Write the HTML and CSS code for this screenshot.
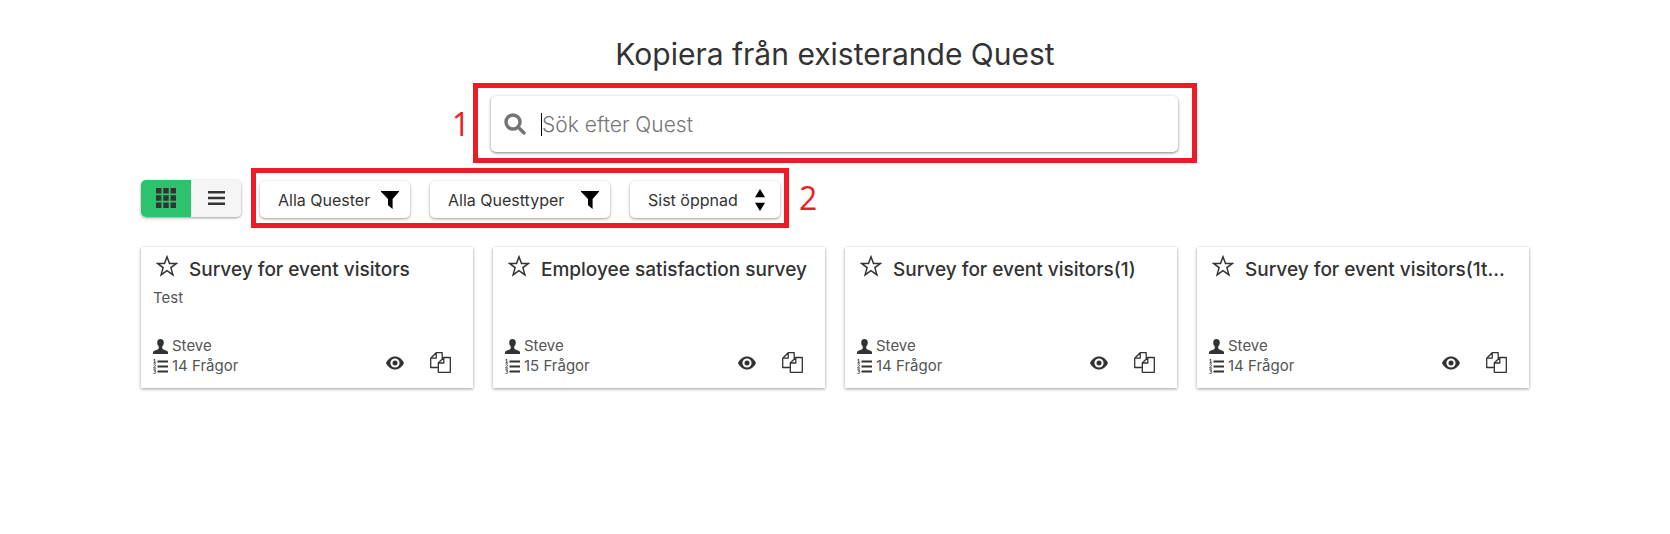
FILE: index.html
```html
<!DOCTYPE html>
<html lang="sv">
<head>
  <meta charset="UTF-8">
  <meta name="viewport" content="width=device-width, initial-scale=1.0">
  <title>Kopiera från existerande Quest</title>
  <link rel="stylesheet" href="styles.css">
</head>
<body>
  <!-- Shared icons -->
  <svg class="sprite" aria-hidden="true">
    <symbol id="icon-search" viewBox="0 0 22 22">
      <circle cx="9" cy="9" r="7" fill="none" stroke="currentColor" stroke-width="3.4"/>
      <path d="M14.500 14.500l5.500 5.500" stroke="currentColor" stroke-width="3.400" stroke-linecap="round"/>
    </symbol>
    <symbol id="icon-grid" viewBox="0 0 20 20">
      <path d="M0 0h5.4v5.4H0zM7.3 0h5.4v5.4H7.3zM14.6 0H20v5.4h-5.4zM0 7.3h5.4v5.4H0zM7.3 7.3h5.4v5.4H7.3zM14.6 7.3H20v5.4h-5.4zM0 14.6h5.4V20H0zM7.3 14.6h5.4V20H7.3zM14.6 14.6H20V20h-5.4z"/>
    </symbol>
    <symbol id="icon-list" viewBox="0 0 17 14">
      <path d="M0 0h17v2.600H0zM0 5.700h17v2.600H0zM0 11.400h17V14H0z"/>
    </symbol>
    <symbol id="icon-filter" viewBox="0 0 18 18">
      <path d="M0 0h18v.8L11.6 8v10L7 14.2V8L0 .8z"/>
    </symbol>
    <symbol id="icon-sort" viewBox="0 0 10 22">
      <path d="M5 0l5 8.2H0zM5 22l5-8.2H0z"/>
    </symbol>
    <symbol id="icon-star" viewBox="0 0 22 22">
      <path d="M11 1.800l2.500 6.600h7l-5.600 4.200 2 7.300L11 15.700l-5.900 4.200 2-7.300L1.500 8.400h7z" fill="none" stroke="currentColor" stroke-width="1.500"/>
    </symbol>
    <symbol id="icon-user" viewBox="0 0 14 14">
      <path d="M7 0c2 0 3.100 1.300 3.100 3.300 0 1.500-.6 2.900-1.500 3.700v1.500c0 .6.4 1 1 1.300l3 1.200c.9.400 1.400 1 1.400 1.900V14H0v-1.100c0-.9.5-1.500 1.400-1.900l3-1.200c.6-.3 1-.7 1-1.300V7C4.500 6.200 3.900 4.800 3.900 3.300 3.900 1.300 5 0 7 0z"/>
    </symbol>
    <symbol id="icon-numbered" viewBox="0 0 15 15">
      <path d="M4.500 1.500H15v2H4.500zM4.500 6.500H15v2H4.500zM4.500 11.500H15v2H4.500z"/>
      <path d="M.5 1l1.300-.6V4M.4 4h2.700M.5 6.100c.4-.7 2.100-.6 2.100.4 0 .9-1.600 1.200-2 2.600h2.500M.4 10.900h2.300l-1.200 1.400c1.800 0 1.700 2.200.2 2.200-.6 0-1-.1-1.300-.4" fill="none" stroke="currentColor" stroke-width=".9"/>
    </symbol>
    <symbol id="icon-eye" viewBox="0 0 18 14">
      <path fill-rule="evenodd" d="M9 .5c4 0 7 2.500 9 6.500-2 4-5 6.500-9 6.500S2 11 0 7C2 3 5 .5 9 .5zM9 2.400a4.600 4.600 0 1 0 0 9.200 4.600 4.600 0 0 0 0-9.200z"/>
      <circle cx="9" cy="7" r="2.500"/>
    </symbol>
    <symbol id="icon-copy" viewBox="0 0 21 21">
      <path d="M8.300 15.500H.7V6.200L6.200.7h6v5.500M6.200.7v5.500H.7M13.800 5.500h6.500v14.800H8.300V11zM13.800 5.500V11H8.300z" fill="none" stroke="currentColor" stroke-width="1.300" stroke-linejoin="round"/>
    </symbol>
  </svg>

  <main class="container">
    <h1>Kopiera från existerande Quest</h1>

    <!-- Search -->
    <div class="highlight search-area">
      <span class="step step-search">1</span>
      <label class="search">
        <svg class="icon-search" aria-hidden="true"><use href="#icon-search"/></svg>
        <span class="caret"></span>
        <input type="text" placeholder="Sök efter Quest" aria-label="Sök efter Quest">
      </label>
    </div>

    <!-- View toggle and filters -->
    <div class="toolbar">
      <div class="view-toggle">
        <button type="button" class="active" aria-label="Rutnät"><svg class="icon-grid"><use href="#icon-grid"/></svg></button>
        <button type="button" aria-label="Lista"><svg class="icon-list"><use href="#icon-list"/></svg></button>
      </div>
      <div class="highlight filters">
        <label class="filter">
          <select aria-label="Quester"><option>Alla Quester</option></select>
          <svg class="icon-filter" aria-hidden="true"><use href="#icon-filter"/></svg>
        </label>
        <label class="filter filter-wide">
          <select aria-label="Questtyper"><option>Alla Questtyper</option></select>
          <svg class="icon-filter" aria-hidden="true"><use href="#icon-filter"/></svg>
        </label>
        <label class="filter">
          <select aria-label="Sortering"><option>Sist öppnad</option></select>
          <svg class="icon-sort" aria-hidden="true"><use href="#icon-sort"/></svg>
        </label>
      </div>
      <span class="step">2</span>
    </div>

    <div class="cards" id="cards"></div>
  </main>

  <script>
    const quests = [
      { title: "Survey for event visitors", description: "Test", owner: "Steve", questions: 14 },
      { title: "Employee satisfaction survey", description: "", owner: "Steve", questions: 15 },
      { title: "Survey for event visitors(1)", description: "", owner: "Steve", questions: 14 },
      { title: "Survey for event visitors(1t...", description: "", owner: "Steve", questions: 14 },
    ];

    // One card per quest
    document.querySelector("#cards").innerHTML = quests.map((quest) => `
      <article class="card">
        <header class="card-header">
          <button type="button" aria-label="Favorit"><svg class="icon-star"><use href="#icon-star"/></svg></button>
          <h2>${quest.title}</h2>
        </header>
        <p class="description">${quest.description}</p>
        <footer class="card-footer">
          <div class="meta">
            <div><svg class="icon-user"><use href="#icon-user"/></svg>${quest.owner}</div>
            <div><svg class="icon-numbered"><use href="#icon-numbered"/></svg>${quest.questions} Frågor</div>
          </div>
          <div class="actions">
            <button type="button" aria-label="Förhandsgranska"><svg class="icon-eye"><use href="#icon-eye"/></svg></button>
            <button type="button" aria-label="Kopiera"><svg class="icon-copy"><use href="#icon-copy"/></svg></button>
          </div>
        </footer>
      </article>
    `).join("");
  </script>
</body>
</html>
```
FILE: styles.css
```css
* {
  box-sizing: border-box;
}

body {
  font-family: Inter, "Open Sans", sans-serif;
  background-color: #fff;
  color: #333;
  margin: 0;
}

button, input, select {
  font-family: inherit;
  color: inherit;
}

button {
  display: flex;
  align-items: center;
  justify-content: center;
  padding: 0;
  border: none;
  background: none;
  cursor: pointer;
}

svg {
  display: block;
  flex: none;
  fill: currentColor;
}

.sprite {
  position: absolute;
  width: 0;
  height: 0;
}

.container {
  max-width: 1428px;
  margin: 0 auto;
  padding: 36px 20px;
}

h1 {
  margin: 0 0 11px;
  font-size: 30px;
  line-height: 36px;
  font-weight: 400;
  text-align: center;
}

/* Red frames and step numbers */
.highlight {
  border: 5px solid #ed1c24;
}

.step {
  font-family: "Open Sans", sans-serif;
  font-size: 32px;
  line-height: 40px;
  color: #ed1c24;
}

.step-search {
  position: absolute;
  right: 100%;
  margin-right: 8px;
}

/* Search */
.search-area {
  display: flex;
  align-items: center;
  position: relative;
  max-width: 724px;
  margin: 0 auto 5px;
  padding: 8px 14px 6px 13px;
}

.search {
  display: flex;
  align-items: center;
  flex: 1;
  height: 56px;
  padding: 0 13px;
  border-radius: 5px;
  background: #fff;
  box-shadow: 0 1px 3px rgba(0, 0, 0, 0.5);
}

.caret {
  width: 1px;
  height: 23px;
  margin-left: 15px;
  background: #000;
}

.search input {
  flex: 1;
  min-width: 0;
  padding: 0;
  border: none;
  outline: none;
  background: none;
  font-size: 21px;
  font-weight: 300;
}

.search input::placeholder {
  color: #757575;
  opacity: 1;
}

.icon-search {
  width: 22px;
  height: 22px;
  color: #757575;
}

/* Toolbar */
.toolbar {
  display: flex;
  align-items: center;
  gap: 10px;
  margin-bottom: 19px;
}

.view-toggle {
  display: flex;
  height: 37px;
  border-radius: 5px;
  overflow: hidden;
  box-shadow: 0 1px 3px rgba(0, 0, 0, 0.4);
}

.view-toggle button {
  width: 50px;
  background: #f5f5f5;
}

.view-toggle .active {
  background: #2dc26e;
}

.icon-grid {
  width: 20px;
  height: 20px;
}

.icon-list {
  width: 17px;
  height: 14px;
}

.filters {
  display: flex;
  gap: 20px;
  height: 60px;
  padding: 8px 4px 5px;
}

.filter {
  display: flex;
  align-items: center;
  justify-content: space-between;
  min-width: 150px;
  height: 37px;
  padding: 0 11px 0 18px;
  border-radius: 5px;
  box-shadow: 0 1px 3px rgba(0, 0, 0, 0.4);
}

.filter-wide {
  min-width: 180px;
}

.filter select {
  appearance: none;
  padding: 0;
  border: none;
  background: none;
  font-size: 16px;
}

.icon-filter {
  width: 18px;
  height: 18px;
  color: #000;
}

.icon-sort {
  width: 10px;
  height: 22px;
  margin: 0 4px;
  color: #000;
}

/* Cards */
.cards {
  display: grid;
  grid-template-columns: repeat(4, minmax(0, 1fr));
  gap: 20px;
}

.card {
  padding: 8px 12px;
  box-shadow: 0 1px 3px rgba(0, 0, 0, 0.4);
}

.card-header {
  display: flex;
  align-items: flex-start;
  gap: 11px;
  padding-left: 3px;
}

.card h2 {
  margin: 0;
  overflow: hidden;
  font-size: 19px;
  line-height: 30px;
  font-weight: 500;
  white-space: nowrap;
}

.icon-star {
  width: 22px;
  height: 22px;
}

.description {
  height: 20px;
  margin: 3px 0 28px;
  font-size: 15px;
  line-height: 20px;
  color: #555;
}

.card-footer {
  display: flex;
  justify-content: space-between;
  align-items: flex-end;
  padding: 0 10px 4px 0;
}

.meta {
  font-size: 15px;
  line-height: 20px;
  color: #555;
}

.meta div {
  display: flex;
  align-items: center;
  gap: 4px;
}

.meta svg {
  color: #333;
}

.icon-user, .icon-numbered {
  width: 15px;
  height: 15px;
}

.actions {
  display: flex;
  align-items: center;
  gap: 26px;
  padding-bottom: 3px;
}

.icon-eye {
  width: 18px;
  height: 14px;
}

.icon-copy {
  width: 21px;
  height: 21px;
}
```
